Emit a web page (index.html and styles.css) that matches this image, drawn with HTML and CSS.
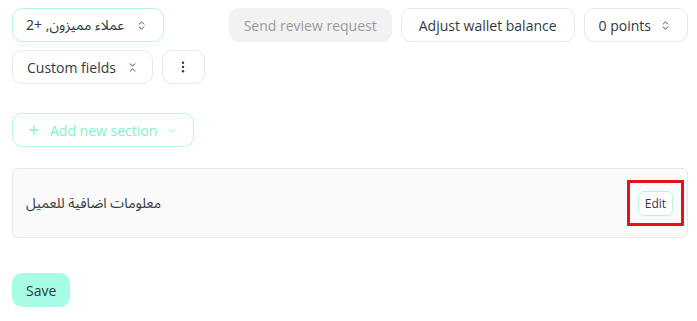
FILE: index.html
```html
<!DOCTYPE html>
<html>
<head>
<meta charset="utf-8">
<link rel="stylesheet" href="styles.css">
</head>
<body>
<div class="page">
  <div class="toolbar">
    <button class="btn btn-mint">
      <span dir="rtl" class="ar">عملاء مميزون, +2</span>
      <svg class="ico" viewBox="0 0 24 24"><path d="m7 15 5 5 5-5"/><path d="m7 9 5-5 5 5"/></svg>
    </button>
    <button class="btn btn-disabled push">Send review request</button>
    <button class="btn btn-wallet">Adjust wallet balance</button>
    <button class="btn btn-pts">0 points
      <svg class="ico" viewBox="0 0 24 24"><path d="m7 15 5 5 5-5"/><path d="m7 9 5-5 5 5"/></svg>
    </button>
  </div>
  <div class="toolbar row2">
    <button class="btn btn-cf">Custom fields
      <svg class="ico" viewBox="0 0 24 24"><path d="m7 20 5-5 5 5"/><path d="m7 4 5 5 5-5"/></svg>
    </button>
    <button class="btn btn-icon">
      <svg class="dots" viewBox="0 0 4 14"><circle cx="2" cy="2" r="1.4"/><circle cx="2" cy="7" r="1.4"/><circle cx="2" cy="12" r="1.4"/></svg>
    </button>
  </div>
  <div class="add-row">
    <button class="btn btn-add">
      <svg class="plus" viewBox="0 0 24 24"><path d="M12 5v14M5 12h14"/></svg>
      Add new section
      <svg class="ico chev" viewBox="0 0 24 24"><path d="m6 9 6 6 6-6"/></svg>
    </button>
  </div>
  <div class="card">
    <span class="ar card-title" dir="rtl">معلومات اضافية للعميل</span>
    <div class="highlight">
      <button class="btn-edit">Edit</button>
    </div>
  </div>
  <div class="save-row">
    <button class="btn-save">Save</button>
  </div>
</div>
</body>
</html>
```
FILE: styles.css
```css
* { box-sizing: border-box; }
html, body { margin: 0; padding: 0; background: #ffffff; }
body {
  font-family: "Open Sans", "Noto Sans", sans-serif;
  color: #343a40;
  width: 697px;
  height: 321px;
  overflow: hidden;
}
.page {
  padding: 8px 9px 0 12px;
}
.toolbar {
  display: flex;
  align-items: center;
  gap: 9px;
}
.push { margin-left: auto; }
.row2 { margin-top: 8px; }
.btn {
  display: inline-flex;
  align-items: center;
  gap: 10px;
  height: 34px;
  padding: 0 14px;
  border: 1px solid #e8e8e8;
  border-radius: 10px;
  background: #fff;
  font-family: inherit;
  font-size: 14px;
  color: #343a40;
  white-space: nowrap;
}
.btn-mint { border-color: #b6f7e3; padding: 0 16px 0 13px; gap: 12px; }
.btn-wallet { padding: 0 17px; }
.btn-pts { padding-right: 16px; gap: 9px; }
.btn-cf { padding-right: 14px; gap: 11px; }
.btn-disabled {
  background: #f2f2f2;
  border-color: #f2f2f2;
  color: #9a9a9a;
}
.ar {
  font-family: "Noto Sans Arabic", "DejaVu Sans", sans-serif;
  font-size: 14px;
}
.ico {
  width: 11px;
  height: 11px;
  fill: none;
  stroke: #343a40;
  stroke-width: 2;
  stroke-linecap: round;
  stroke-linejoin: round;
}
.btn-icon { width: 43px; justify-content: center; padding: 0; }
.dots { width: 4px; height: 12px; fill: #343a40; }
.add-row { margin-top: 29px; }
.btn-add {
  border-color: #b6f7e3;
  color: #80f2cf;
  font-size: 14px;
  padding: 0 16px 0 14px;
  gap: 9px;
}
.plus {
  width: 14px; height: 14px;
  fill: none; stroke: #80f2cf; stroke-width: 2.2; stroke-linecap: round;
}
.chev { stroke: #80f2cf; }
.card {
  margin-top: 21px;
  height: 70px;
  border: 1px solid #e8e8e8;
  border-radius: 6px;
  background: #fafafa;
  display: flex;
  align-items: center;
  justify-content: space-between;
  padding: 0 3px 0 13px;
}
.card-title { color: #343a40; font-size: 14px; }
.highlight {
  border: 3px solid #e0141e;
  width: 57px;
  height: 46px;
  display: flex;
  align-items: center;
  justify-content: center;
}
.btn-edit {
  border: 1px solid #b6f7e3;
  border-radius: 6px;
  background: #fff;
  height: 25px;
  padding: 0 6px;
  font-family: inherit;
  font-size: 12px;
  color: #343a40;
}
.save-row { margin-top: 35px; }
.btn-save {
  height: 34px;
  padding: 0 14px;
  border: none;
  border-radius: 10px;
  background: #a6fde4;
  font-family: inherit;
  font-size: 14px;
  color: #2a3a45;
}
```
